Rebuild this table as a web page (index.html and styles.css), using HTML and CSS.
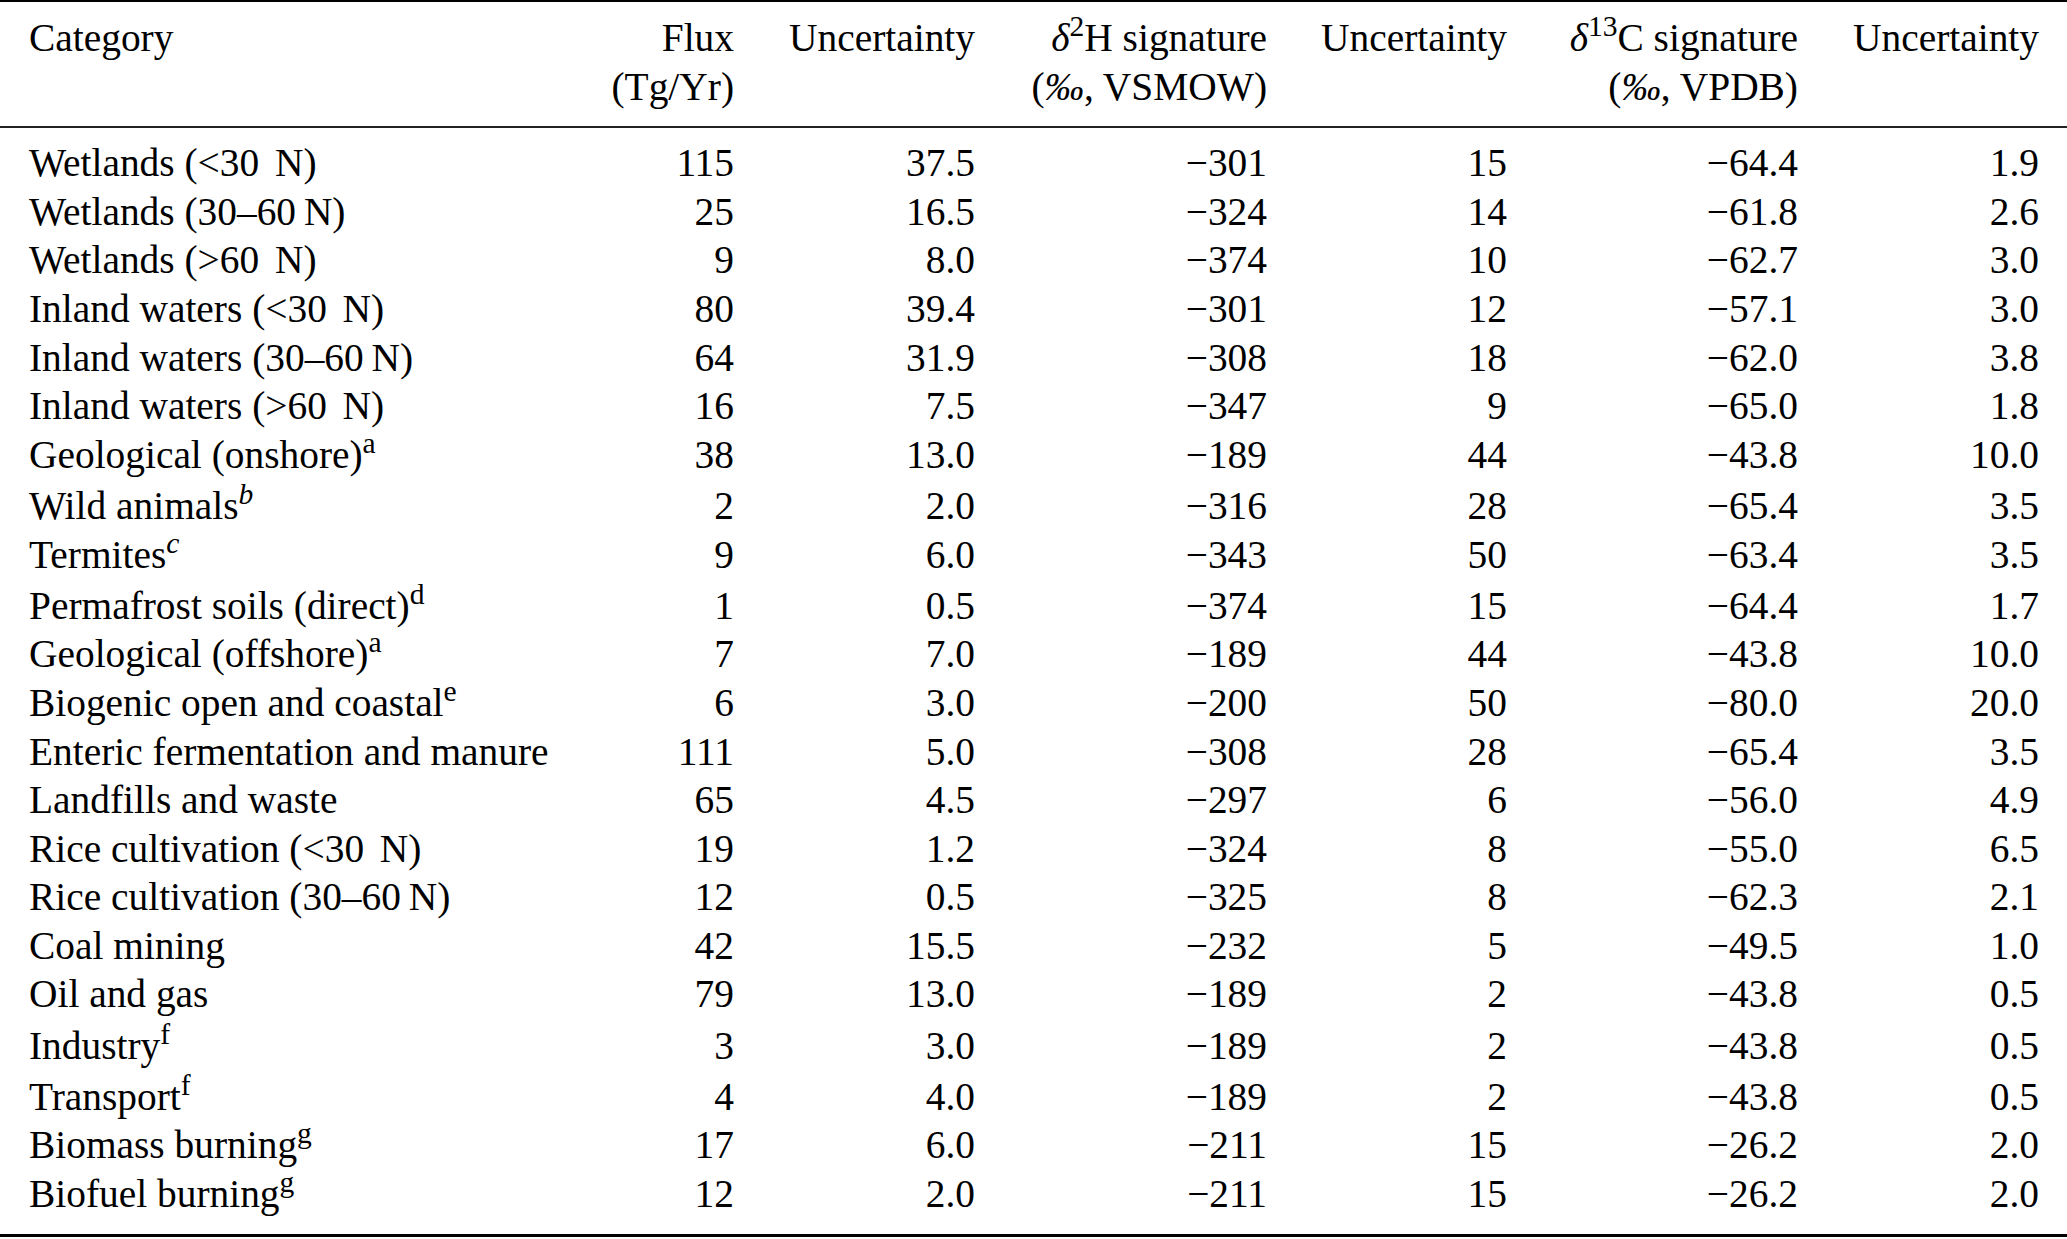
FILE: index.html
```html
<!DOCTYPE html>
<html lang="en">
<head>
<meta charset="utf-8">
<title>Methane source categories</title>
<link rel="stylesheet" href="styles.css">
</head>
<body>
<div class="table">
  <div class="thead">
    <div class="row">
      <div class="cell name">Category</div>
      <div class="cell num">Flux<br>(Tg/Yr)</div>
      <div class="cell num">Uncertainty</div>
      <div class="cell num"><i>δ</i><sup class="hs">2</sup>H signature<br>(<i>‰</i>, VSMOW)</div>
      <div class="cell num">Uncertainty</div>
      <div class="cell num"><i>δ</i><sup class="hs">13</sup>C signature<br>(<i>‰</i>, VPDB)</div>
      <div class="cell num">Uncertainty</div>
    </div>
  </div>
  <div class="tbody">
    <div class="row"><div class="cell name">Wetlands (&lt;30<span class="unit">N</span>)</div><div class="cell num">115</div><div class="cell num">37.5</div><div class="cell num">−301</div><div class="cell num">15</div><div class="cell num">−64.4</div><div class="cell num">1.9</div></div>
    <div class="row"><div class="cell name">Wetlands (30–60&thinsp;N)</div><div class="cell num">25</div><div class="cell num">16.5</div><div class="cell num">−324</div><div class="cell num">14</div><div class="cell num">−61.8</div><div class="cell num">2.6</div></div>
    <div class="row"><div class="cell name">Wetlands (&gt;60<span class="unit">N</span>)</div><div class="cell num">9</div><div class="cell num">8.0</div><div class="cell num">−374</div><div class="cell num">10</div><div class="cell num">−62.7</div><div class="cell num">3.0</div></div>
    <div class="row"><div class="cell name">Inland waters (&lt;30<span class="unit">N</span>)</div><div class="cell num">80</div><div class="cell num">39.4</div><div class="cell num">−301</div><div class="cell num">12</div><div class="cell num">−57.1</div><div class="cell num">3.0</div></div>
    <div class="row"><div class="cell name">Inland waters (30–60&thinsp;N)</div><div class="cell num">64</div><div class="cell num">31.9</div><div class="cell num">−308</div><div class="cell num">18</div><div class="cell num">−62.0</div><div class="cell num">3.8</div></div>
    <div class="row"><div class="cell name">Inland waters (&gt;60<span class="unit">N</span>)</div><div class="cell num">16</div><div class="cell num">7.5</div><div class="cell num">−347</div><div class="cell num">9</div><div class="cell num">−65.0</div><div class="cell num">1.8</div></div>
    <div class="row"><div class="cell name">Geological (onshore)<sup>a</sup></div><div class="cell num">38</div><div class="cell num">13.0</div><div class="cell num">−189</div><div class="cell num">44</div><div class="cell num">−43.8</div><div class="cell num">10.0</div></div>
    <div class="row tall"><div class="cell name">Wild animals<sup><i>b</i></sup></div><div class="cell num">2</div><div class="cell num">2.0</div><div class="cell num">−316</div><div class="cell num">28</div><div class="cell num">−65.4</div><div class="cell num">3.5</div></div>
    <div class="row"><div class="cell name">Termites<sup><i>c</i></sup></div><div class="cell num">9</div><div class="cell num">6.0</div><div class="cell num">−343</div><div class="cell num">50</div><div class="cell num">−63.4</div><div class="cell num">3.5</div></div>
    <div class="row tall"><div class="cell name">Permafrost soils (direct)<sup>d</sup></div><div class="cell num">1</div><div class="cell num">0.5</div><div class="cell num">−374</div><div class="cell num">15</div><div class="cell num">−64.4</div><div class="cell num">1.7</div></div>
    <div class="row"><div class="cell name">Geological (offshore)<sup>a</sup></div><div class="cell num">7</div><div class="cell num">7.0</div><div class="cell num">−189</div><div class="cell num">44</div><div class="cell num">−43.8</div><div class="cell num">10.0</div></div>
    <div class="row"><div class="cell name">Biogenic open and coastal<sup>e</sup></div><div class="cell num">6</div><div class="cell num">3.0</div><div class="cell num">−200</div><div class="cell num">50</div><div class="cell num">−80.0</div><div class="cell num">20.0</div></div>
    <div class="row"><div class="cell name">Enteric fermentation and manure</div><div class="cell num">111</div><div class="cell num">5.0</div><div class="cell num">−308</div><div class="cell num">28</div><div class="cell num">−65.4</div><div class="cell num">3.5</div></div>
    <div class="row"><div class="cell name">Landfills and waste</div><div class="cell num">65</div><div class="cell num">4.5</div><div class="cell num">−297</div><div class="cell num">6</div><div class="cell num">−56.0</div><div class="cell num">4.9</div></div>
    <div class="row"><div class="cell name">Rice cultivation (&lt;30<span class="unit">N</span>)</div><div class="cell num">19</div><div class="cell num">1.2</div><div class="cell num">−324</div><div class="cell num">8</div><div class="cell num">−55.0</div><div class="cell num">6.5</div></div>
    <div class="row"><div class="cell name">Rice cultivation (30–60&thinsp;N)</div><div class="cell num">12</div><div class="cell num">0.5</div><div class="cell num">−325</div><div class="cell num">8</div><div class="cell num">−62.3</div><div class="cell num">2.1</div></div>
    <div class="row"><div class="cell name">Coal mining</div><div class="cell num">42</div><div class="cell num">15.5</div><div class="cell num">−232</div><div class="cell num">5</div><div class="cell num">−49.5</div><div class="cell num">1.0</div></div>
    <div class="row"><div class="cell name">Oil and gas</div><div class="cell num">79</div><div class="cell num">13.0</div><div class="cell num">−189</div><div class="cell num">2</div><div class="cell num">−43.8</div><div class="cell num">0.5</div></div>
    <div class="row tall"><div class="cell name">Industry<sup>f</sup></div><div class="cell num">3</div><div class="cell num">3.0</div><div class="cell num">−189</div><div class="cell num">2</div><div class="cell num">−43.8</div><div class="cell num">0.5</div></div>
    <div class="row tall"><div class="cell name">Transport<sup>f</sup></div><div class="cell num">4</div><div class="cell num">4.0</div><div class="cell num">−189</div><div class="cell num">2</div><div class="cell num">−43.8</div><div class="cell num">0.5</div></div>
    <div class="row"><div class="cell name">Biomass burning<sup>g</sup></div><div class="cell num">17</div><div class="cell num">6.0</div><div class="cell num">−211</div><div class="cell num">15</div><div class="cell num">−26.2</div><div class="cell num">2.0</div></div>
    <div class="row"><div class="cell name">Biofuel burning<sup>g</sup></div><div class="cell num">12</div><div class="cell num">2.0</div><div class="cell num">−211</div><div class="cell num">15</div><div class="cell num">−26.2</div><div class="cell num">2.0</div></div>
  </div>
</div>
</body>
</html>
```

FILE: styles.css
```css
html, body {
  margin: 0;
  padding: 0;
  background: #ffffff;
}

body {
  width: 2067px;
  height: 1239px;
  overflow: hidden;
  font-family: "Liberation Serif", "Times New Roman", serif;
  font-size: 39.4px;
  line-height: 48.6px;
  color: #000000;
}

.table {
  width: 2067px;
  border-top: 2px solid #000;
  border-bottom: 3px solid #000;
}

.thead {
  padding: 12px 0 15px;
  border-bottom: 2px solid #222;
}

.tbody {
  padding: 11px 0 15px;
}

.row {
  display: grid;
  grid-template-columns: 531px 174px 241px 292px 240px 291px 241px;
  padding: 0 28px 0 29px;
}

.row.tall {
  padding-top: 2.6px;
}

.cell {
  white-space: nowrap;
}

.name {
  text-align: left;
}

.num {
  text-align: right;
}

.unit {
  margin-left: 0.4em;
}

sup {
  font-size: 0.75em;
  line-height: 0;
  vertical-align: 0.5em;
}

sup.hs {
  vertical-align: 0.52em;
}

i {
  font-style: italic;
}
```
